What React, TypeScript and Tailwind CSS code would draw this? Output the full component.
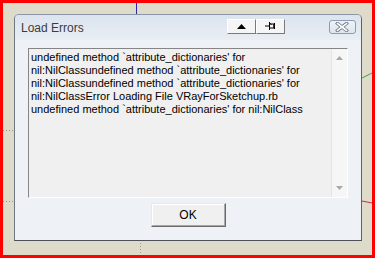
import React from 'react'

const lines = [
  "undefined method `attribute_dictionaries' for",
  "nil:NilClassundefined method `attribute_dictionaries' for",
  "nil:NilClassundefined method `attribute_dictionaries' for",
  'nil:NilClassError Loading File VRayForSketchup.rb',
  "undefined method `attribute_dictionaries' for nil:NilClass",
]

function PinIcon() {
  return (
    <svg width="13" height="10" viewBox="0 0 13 10">
      <path d="M1 5h4" stroke="#000" strokeWidth="1" />
      <path d="M5.5 1v8" stroke="#000" strokeWidth="1" />
      <path d="M6 3h4v4H6" fill="none" stroke="#000" strokeWidth="1" />
      <path d="M6 2.5l1.5 1M10 3v4" stroke="#000" strokeWidth="1" />
      <path d="M10.5 2v6" stroke="#000" strokeWidth="1" />
    </svg>
  )
}

function CloseGlyph() {
  return (
    <svg width="14" height="10" viewBox="0 0 14 10">
      <path d="M2.5 1.5l9 7M11.5 1.5l-9 7" stroke="#6d7787" strokeWidth="3.4" strokeLinecap="square" />
      <path d="M2.5 1.5l9 7M11.5 1.5l-9 7" stroke="#ffffff" strokeWidth="1.6" strokeLinecap="square" />
    </svg>
  )
}

export default function App() {
  return (
    <div className="relative w-[375px] h-[258px] overflow-hidden bg-[#dfdbca] border-[3px] border-[#ff0000] pl-[11px] pt-[11px]" style={{ fontFamily: '"Liberation Sans", Arial, sans-serif' }}>
      {/* sketchup canvas axes behind the dialog */}
      <svg className="absolute left-[-3px] top-[-3px]" width="375" height="258">
        <path d="M136.5 0v14" stroke="#2a2aa8" strokeWidth="1" />
        <path d="M140.5 243v12" stroke="#9a9888" strokeWidth="1" strokeDasharray="1 2" />
        <path d="M3 130.5h10" stroke="#9a9888" strokeWidth="1" strokeDasharray="1 2" />
        <path d="M3 201.5h10" stroke="#9a9888" strokeWidth="1" strokeDasharray="1 2" />
        <path d="M362 78l10 -5" stroke="#3aa83a" strokeWidth="1" />
        <path d="M362 201l10 2" stroke="#c83030" strokeWidth="1" />
      </svg>

      <div className="relative flex flex-col w-[348px] h-[227px] rounded-t-[5px] border border-t-[#8a95a6] border-l-[#6f7782] border-r-[#5c6169] border-b-[#4d5157] bg-[#eef1f5]">
        {/* title bar */}
        <div className="flex items-center h-[25px] rounded-t-[4px] bg-gradient-to-b from-[#dbe4ef] to-[#e9eef4] pl-[6px]">
          <span className="text-[12px] text-[#3c3c3c] leading-none">Load Errors</span>
          <div className="flex ml-[143px] mt-[-3px]">
            <div className="flex items-center justify-center w-[29px] h-[15px] bg-[#f5f5f5] border border-t-white border-l-white border-b-[#7a7a7a] border-r-[#7a7a7a]">
              <svg width="9" height="5" viewBox="0 0 9 5">
                <path d="M4.5 0L9 5H0z" fill="#000" />
              </svg>
            </div>
            <div className="flex items-center justify-center w-[29px] h-[15px] bg-[#f5f5f5] border border-t-white border-l-white border-b-[#7a7a7a] border-r-[#7a7a7a]">
              <PinIcon />
            </div>
          </div>
          <div className="flex items-center justify-center ml-[44px] mt-[-1px] w-[27px] h-[14px] rounded-[3px] border border-[#8e9bb0] bg-gradient-to-b from-[#eef2f7] to-[#dfe6ee]">
            <CloseGlyph />
          </div>
        </div>

        {/* body */}
        <div className="flex flex-col items-center px-[12px] pt-[8px]">
          <div className="flex w-[320px] h-[150px] bg-[#f0f0f0] border border-t-[#858585] border-l-[#858585] border-b-white border-r-white">
            <div className="flex-1 pl-[2px] pt-[2px] text-[11px] leading-[13px] text-black">
              {lines.map((l, i) => (
                <div key={i} className="whitespace-pre">{l}</div>
              ))}
            </div>
            <div className="flex flex-col items-center justify-between w-[16px] border-l border-[#e4e4e4] bg-[#f6f6f6] pt-[7px] pb-[7px]">
              <svg width="7" height="4" viewBox="0 0 7 4">
                <path d="M3.5 0L7 4H0z" fill="#a8a8a8" />
              </svg>
              <svg width="7" height="4" viewBox="0 0 7 4">
                <path d="M0 0h7L3.5 4z" fill="#a8a8a8" />
              </svg>
            </div>
          </div>
          <div className="flex items-center justify-center mt-[5px] w-[75px] h-[24px] bg-[#f0f0f0] border border-t-[#e8e8e8] border-l-[#e8e8e8] border-b-[#6a6a6a] border-r-[#6a6a6a] shadow-[inset_-1px_-1px_0_#a8a8a8,inset_1px_1px_0_#ffffff] text-[12px] text-black">
            OK
          </div>
        </div>
      </div>
    </div>
  )
}
